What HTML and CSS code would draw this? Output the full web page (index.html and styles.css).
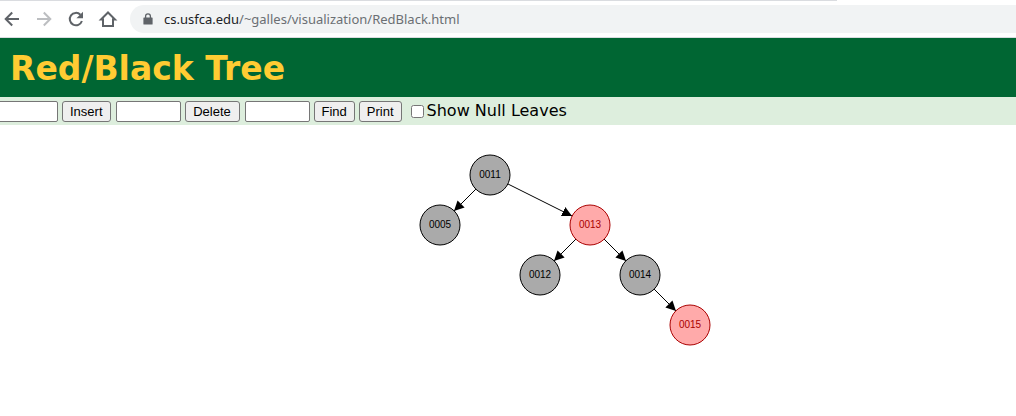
FILE: index.html
```html
<!DOCTYPE html>
<html lang="en">
<head>
<meta charset="utf-8">
<title>Red/Black Tree Visualization</title>
<link rel="stylesheet" href="styles.css">
</head>
<body>
<div class="tab-edge"></div>
<nav class="toolbar" aria-label="Browser">
  <button class="nav-button" type="button" aria-label="Back">
    <svg viewBox="0 0 20 20"><path class="stroke" d="M17 10H4M10.200 3.500L3.700 10l6.500 6.500"/></svg>
  </button>
  <button class="nav-button nav-button-off" type="button" aria-label="Forward" disabled>
    <svg viewBox="0 0 20 20"><path class="stroke" d="M3 10h13M9.800 3.500l6.500 6.500-6.500 6.500"/></svg>
  </button>
  <button class="nav-button" type="button" aria-label="Reload">
    <svg viewBox="0 0 20 20"><path class="stroke" d="M14.400 5.700A6.200 6.200 0 1 0 15.900 12"/><path class="solid" d="M17 2.700v6.600h-6.600z"/></svg>
  </button>
  <button class="nav-button" type="button" aria-label="Home">
    <svg viewBox="0 0 20 20"><path class="stroke" d="M3 10.500L10 3.500l7 7h-2v6.500H5v-6.500z"/></svg>
  </button>
  <div class="address">
    <svg class="lock" viewBox="0 0 10 12"><path class="solid" d="M1 4.500h8q.6 0 .6.600v5.800q0 .6-.6.600H1q-.6 0-.6-.6V5.100q0-.6.6-.6z"/><path class="shackle" d="M2.600 5V3.200a2.400 2.400 0 0 1 4.800 0V5"/></svg>
    <span class="url"><span class="host">cs.usfca.edu</span>/~galles/visualization/RedBlack.html</span>
  </div>
</nav>
<header class="banner"><h1>Red/Black Tree</h1></header>
<form class="controls">
  <input class="field" type="text" aria-label="Value to insert">
  <button class="action" type="button">Insert</button>
  <input class="field" type="text" aria-label="Value to delete">
  <button class="action action-wide" type="button">Delete</button>
  <input class="field" type="text" aria-label="Value to find">
  <button class="action" type="button">Find</button>
  <button class="action" type="button">Print</button>
  <label class="toggle"><input class="check" type="checkbox">Show Null Leaves</label>
</form>
<main>
  <svg class="tree" role="img" aria-label="Red/black tree">
    <defs>
      <marker id="arrow" markerUnits="userSpaceOnUse" markerWidth="10" markerHeight="10" refX="10" refY="5" orient="auto"><path d="M0 0l10 5-10 5z"/></marker>
    </defs>
    <g class="edges">
      <path d="M476 64L454 86"/>
      <path d="M508 59L572 91"/>
      <path d="M576 114L554 136"/>
      <path d="M604 114L626 136"/>
      <path d="M654 164L676 186"/>
    </g>
    <g class="node"><circle cx="490" cy="50" r="20"/><text x="490" y="53">0011</text></g>
    <g class="node"><circle cx="440" cy="100" r="20"/><text x="440" y="103">0005</text></g>
    <g class="node red"><circle cx="590" cy="100" r="20"/><text x="590" y="103">0013</text></g>
    <g class="node"><circle cx="540" cy="150" r="20"/><text x="540" y="153">0012</text></g>
    <g class="node"><circle cx="640" cy="150" r="20"/><text x="640" y="153">0014</text></g>
    <g class="node red"><circle cx="690" cy="200" r="20"/><text x="690" y="203">0015</text></g>
  </svg>
</main>
</body>
</html>
```

FILE: styles.css
```css
* { box-sizing: border-box; }
body {
  margin: 0;
  background: #fff;
  color: #000;
  font-family: Verdana, "DejaVu Sans", sans-serif;
  overflow-x: hidden;
}
.tab-edge {
  width: 82.4%;
  height: 1px;
  background: #dadce0;
}
.toolbar {
  display: flex;
  align-items: center;
  gap: 12px;
  padding: 4px 0 4px 2px;
  border-bottom: 1px solid #dadce0;
}
.nav-button {
  flex: none;
  width: 20px;
  height: 20px;
  padding: 0;
  border: 0;
  background: none;
  color: #5f6368;
}
.nav-button-off { color: #bcbec1; }
.nav-button svg { display: block; width: 20px; height: 20px; }
.stroke { fill: none; stroke: currentColor; stroke-width: 2; }
.solid { fill: currentColor; }
.address {
  flex: 1;
  display: flex;
  align-items: center;
  gap: 11px;
  height: 28px;
  padding-left: 13px;
  border-radius: 14px 0 0 14px;
  background: #f1f3f4;
  color: #5f6368;
}
.lock { width: 10px; height: 12px; }
.shackle { fill: none; stroke: currentColor; stroke-width: 1.3; }
.url {
  color: #6b6f73;
  font: 13px/20px "Segoe UI", "Noto Sans", "Open Sans", sans-serif;
  white-space: nowrap;
}
.host { color: #202124; }
.banner { padding: 11px 10px 9px; background: #063; color: #fc3; }
.banner h1 { margin: 0; font-size: 33px; line-height: 39px; }
.controls {
  display: flex;
  align-items: center;
  gap: 4px;
  height: 28px;
  margin-left: -8px;
  background: #ded;
}
.field, .action {
  flex: none;
  height: 21px;
  border: 1px solid #767676;
  font: 13px/15px Arial, "Liberation Sans", sans-serif;
}
.field { width: 65px; margin: 0 0 0 1px; padding: 1px 2px; border-radius: 2px; background: #fff; }
.action { padding: 1px 7px; border-radius: 3px; background: #efefef; color: #000; }
.action-wide { width: 55px; }
.toggle {
  display: flex;
  align-items: center;
  gap: 3px;
  margin-left: 5px;
  font-size: 16px;
  line-height: 20px;
  white-space: nowrap;
}
.check { width: 13px; height: 13px; margin: 0; }
.tree { display: block; width: 100%; height: 260px; overflow: visible; }
.edges path { fill: none; stroke: #000; stroke-width: 1; marker-end: url(#arrow); }
.node circle { fill: #aaa; stroke: #000; stroke-width: 1; }
.node text { fill: #000; font: 10px Arial, "Liberation Sans", sans-serif; text-anchor: middle; }
.red circle { fill: #faa; stroke: #a00; }
.red text { fill: #a00; }
```
